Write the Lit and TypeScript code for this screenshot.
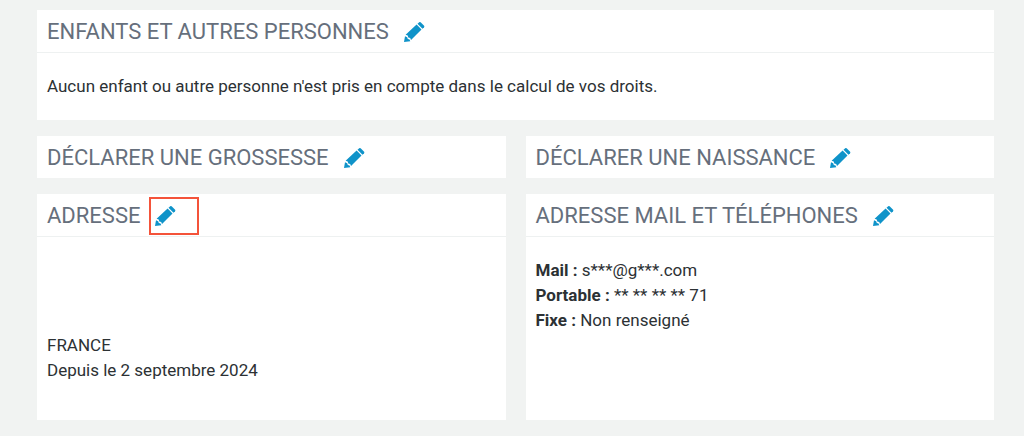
import { LitElement, html, css } from "lit";
import { customElement, property } from "lit/decorators.js";

@customElement("edit-button")
class EditButton extends LitElement {
  @property() label = "";
  @property({ type: Boolean, reflect: true }) highlighted = false;

  static styles = css`
    :host { display: inline-flex; }
    button {
      display: flex;
      align-items: center;
      padding: 0 5px;
      height: 38px;
      border: 0;
      background: none;
      cursor: pointer;
    }
    svg { display: block; width: 22px; height: 22px; fill: #0f93c9; }
    :host([highlighted]) button {
      width: 50px;
      outline: 2px solid #f4533a;
      outline-offset: -2px;
    }
  `;

  render() {
    return html`<button type="button" aria-label=${this.label}>
      <svg viewBox="0 0 22 22" aria-hidden="true">
        <path d="M1 21l1-5.800 2.200 1 .6 1.700 1.700.5 .8 1.800z" />
        <path d="M2.600 13.700L13.600 3.600l4.900 5-10.500 10.300-.8-1.900-1.900-.6-.6-1.800z" />
        <path d="M14.500 2.700l1.700-1.500q.7-.5 1.400.1l3.500 3.500q.6.700 0 1.400l-1.600 1.600z" />
      </svg>
    </button>`;
  }
}

@customElement("info-card")
class InfoCard extends LitElement {
  @property() heading = "";
  @property({ type: Boolean, reflect: true }) compact = false;
  @property({ type: Boolean }) highlighted = false;

  static styles = css`
    :host { display: block; background: #fff; }
    header {
      display: flex;
      align-items: center;
      gap: 9px;
      height: 40px;
      padding: 2px 10px 0;
      border-bottom: 1px solid #eef1f1;
    }
    :host([compact]) header { border-bottom: 0; }
    h2 {
      margin: 0;
      font-size: 22px;
      line-height: 26px;
      font-weight: 400;
      color: #666f7c;
      white-space: nowrap;
    }
    .body { padding: 21px 10px; }
    :host([compact]) .body { display: none; }
  `;

  render() {
    return html`
      <header>
        <h2>${this.heading}</h2>
        <edit-button label="Modifier : ${this.heading}" ?highlighted=${this.highlighted}></edit-button>
      </header>
      <div class="body"><slot></slot></div>
    `;
  }
}

@customElement("app-root")
class AppRoot extends LitElement {
  static styles = css`
    :host {
      display: block;
      box-sizing: border-box;
      min-height: 100vh;
      padding: 10px 30px 16px 37px;
      background: #f1f3f2;
      color: #2c3134;
      font: 17px/25px Roboto, sans-serif;
    }
    main {
      display: grid;
      grid-template-columns: 1fr 1fr;
      gap: 16px 20px;
    }
    .wide { grid-column: 1 / -1; }
    p { margin: 0; }
    .address { padding-top: 75px; padding-bottom: 16px; }
    b { font-weight: 700; }
  `;

  render() {
    return html`<main>
      <info-card class="wide" heading="ENFANTS ET AUTRES PERSONNES">
        <p>Aucun enfant ou autre personne n'est pris en compte dans le calcul de vos droits.</p>
      </info-card>
      <info-card compact heading="DÉCLARER UNE GROSSESSE"></info-card>
      <info-card compact heading="DÉCLARER UNE NAISSANCE"></info-card>
      <info-card heading="ADRESSE" highlighted>
        <div class="address">
          <p>FRANCE</p>
          <p>Depuis le 2 septembre 2024</p>
        </div>
      </info-card>
      <info-card heading="ADRESSE MAIL ET TÉLÉPHONES">
        <p><b>Mail :</b> s***@g***.com</p>
        <p><b>Portable :</b> ** ** ** ** 71</p>
        <p><b>Fixe :</b> Non renseigné</p>
      </info-card>
    </main>`;
  }
}
